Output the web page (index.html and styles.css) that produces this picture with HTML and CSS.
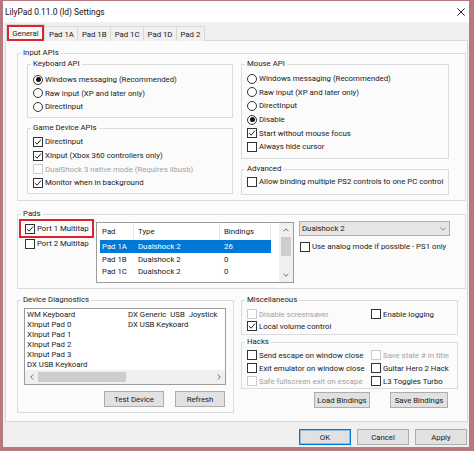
FILE: index.html
```html
<!DOCTYPE html>
<html>
<head>
<meta charset="utf-8">
<title>LilyPad Settings</title>
<link rel="stylesheet" href="styles.css">
</head>
<body>
<div class="window">
  <div class="titlebar">
    <span class="title">LilyPad 0.11.0 (ld) Settings</span>
    <svg class="close" viewBox="0 0 8 8"><path d="M0.3 0.3L7.7 7.7M7.7 0.3L0.3 7.7" stroke="#111" stroke-width="0.9" fill="none"/></svg>
  </div>
  <div class="client">
    <div class="tabs">
      <div class="tab active">General</div>
      <div class="tab first">Pad 1A</div>
      <div class="tab">Pad 1B</div>
      <div class="tab">Pad 1C</div>
      <div class="tab">Pad 1D</div>
      <div class="tab">Pad 2</div>
    </div>
    <div class="panel">
      <fieldset class="grp g-input">
        <legend>Input APIs</legend>
        <div class="cols">
          <div class="col col-l">
            <fieldset class="grp g-kbd">
              <legend>Keyboard API</legend>
              <div class="items pt4 rh135">
                <div class="it"><span class="rb on"></span>Windows messaging (Recommended)</div>
                <div class="it"><span class="rb"></span>Raw input (XP and later only)</div>
                <div class="it"><span class="rb"></span>DirectInput</div>
              </div>
            </fieldset>
            <fieldset class="grp g-game">
              <legend>Game Device APIs</legend>
              <div class="items pt2 rh137">
                <div class="it"><span class="cb"><svg viewBox="0 0 8 8"><path d="M1 4.1L3.1 6.2L7 1.6" stroke="#222" stroke-width="1" fill="none"/></svg></span>DirectInput</div>
                <div class="it"><span class="cb"><svg viewBox="0 0 8 8"><path d="M1 4.1L3.1 6.2L7 1.6" stroke="#222" stroke-width="1" fill="none"/></svg></span>XInput (Xbox 360 controllers only)</div>
                <div class="it dis"><span class="cb"></span>DualShock 3 native mode (Requires libusb)</div>
                <div class="it"><span class="cb"><svg viewBox="0 0 8 8"><path d="M1 4.1L3.1 6.2L7 1.6" stroke="#222" stroke-width="1" fill="none"/></svg></span>Monitor when in background</div>
              </div>
            </fieldset>
          </div>
          <div class="col col-r">
            <fieldset class="grp g-mouse">
              <legend>Mouse API</legend>
              <div class="items pt3 rh136">
                <div class="it"><span class="rb"></span>Windows messaging (Recommended)</div>
                <div class="it"><span class="rb"></span>Raw input (XP and later only)</div>
                <div class="it"><span class="rb"></span>DirectInput</div>
                <div class="it"><span class="rb on"></span>Disable</div>
                <div class="it"><span class="cb"><svg viewBox="0 0 8 8"><path d="M1 4.1L3.1 6.2L7 1.6" stroke="#222" stroke-width="1" fill="none"/></svg></span>Start without mouse focus</div>
                <div class="it"><span class="cb"></span>Always hide cursor</div>
              </div>
            </fieldset>
            <fieldset class="grp g-adv">
              <legend>Advanced</legend>
              <div class="items pt1 rh135">
                <div class="it"><span class="cb"></span>Allow binding multiple PS2 controls to one PC control</div>
              </div>
            </fieldset>
          </div>
        </div>
      </fieldset>

      <fieldset class="grp g-pads">
        <legend>Pads</legend>
        <div class="pads-body">
          <div class="ports">
            <div class="port hl"><span class="cb"><svg viewBox="0 0 8 8"><path d="M1 4.1L3.1 6.2L7 1.6" stroke="#222" stroke-width="1" fill="none"/></svg></span>Port 1 Multitap</div>
            <div class="port"><span class="cb"></span>Port 2 Multitap</div>
          </div>
          <div class="lv">
            <div class="lv-main">
              <div class="lv-head">
                <span class="h1">Pad</span><span class="h2">Type</span><span class="h3">Bindings</span>
              </div>
              <div class="lv-row sel"><span class="c1">Pad 1A</span><span class="c2">Dualshock 2</span><span class="c3">26</span></div>
              <div class="lv-row"><span class="c1">Pad 1B</span><span class="c2">Dualshock 2</span><span class="c3">0</span></div>
              <div class="lv-row"><span class="c1">Pad 1C</span><span class="c2">Dualshock 2</span><span class="c3">0</span></div>
              <div class="lv-row"><span class="c1">Pad 1D</span><span class="c2">Dualshock 2</span><span class="c3">26</span></div>
            </div>
            <div class="vscroll">
              <div class="sbtn"><svg viewBox="0 0 6 4"><path d="M0.5 3.3L3 0.8L5.5 3.3" stroke="#606060" stroke-width="0.9" fill="none"/></svg></div>
              <div class="vthumb"></div>
              <div class="sfill"></div>
              <div class="sbtn"><svg viewBox="0 0 6 4"><path d="M0.5 0.7L3 3.2L5.5 0.7" stroke="#606060" stroke-width="0.9" fill="none"/></svg></div>
            </div>
          </div>
          <div class="pad-opts">
            <div class="combo"><span class="combo-text">Dualshock 2</span><svg viewBox="0 0 6 4"><path d="M0.4 0.6L3 3.2L5.6 0.6" stroke="#707070" stroke-width="0.8" fill="none"/></svg></div>
            <div class="it analog"><span class="cb"></span>Use analog mode if possible - PS1 only</div>
          </div>
        </div>
      </fieldset>

      <div class="bottom">
        <fieldset class="grp g-diag">
          <legend>Device Diagnostics</legend>
          <div class="lb">
            <div class="lb-items">
              <span>WM Keyboard</span>
              <span>XInput Pad 0</span>
              <span>XInput Pad 1</span>
              <span>XInput Pad 2</span>
              <span>XInput Pad 3</span>
              <span>DX USB Keykoard</span>
              <span class="pre">DX Generic  USB  Joystick</span>
              <span>DX USB Keykoard</span>
            </div>
            <div class="hscroll">
              <div class="hbtn"><svg viewBox="0 0 4 6"><path d="M3.2 0.5L0.8 3L3.2 5.5" stroke="#606060" stroke-width="0.9" fill="none"/></svg></div>
              <div class="hthumb"></div>
              <div class="sfill"></div>
              <div class="hbtn"><svg viewBox="0 0 4 6"><path d="M0.8 0.5L3.2 3L0.8 5.5" stroke="#606060" stroke-width="0.9" fill="none"/></svg></div>
            </div>
          </div>
          <div class="btnrow diag-btns">
            <div class="btn w60">Test Device</div>
            <div class="btn w50">Refresh</div>
          </div>
        </fieldset>
        <div class="col-r2">
          <fieldset class="grp g-misc">
            <legend>Miscellaneous</legend>
            <div class="items grid2 pt3 rh12">
              <div class="it dis"><span class="cb"></span>Disable screensaver</div>
              <div class="it"><span class="cb"></span>Enable logging</div>
              <div class="it"><span class="cb"><svg viewBox="0 0 8 8"><path d="M1 4.1L3.1 6.2L7 1.6" stroke="#222" stroke-width="1" fill="none"/></svg></span>Local volume control</div>
            </div>
          </fieldset>
          <fieldset class="grp g-hacks">
            <legend>Hacks</legend>
            <div class="items grid2 pt15 rh13">
              <div class="it"><span class="cb"></span>Send escape on window close</div>
              <div class="it dis"><span class="cb"></span>Save state # in title</div>
              <div class="it"><span class="cb"></span>Exit emulator on window close</div>
              <div class="it"><span class="cb"></span>Guitar Hero 2 Hack</div>
              <div class="it dis"><span class="cb"></span>Safe fullscreen exit on escape</div>
              <div class="it"><span class="cb"></span>L3 Toggles Turbo</div>
            </div>
          </fieldset>
          <div class="btnrow bind-btns">
            <div class="btn w56">Load Bindings</div>
            <div class="btn w58">Save Bindings</div>
          </div>
        </div>
      </div>
    </div>
    <div class="footer">
      <div class="btn w52 default">OK</div>
      <div class="btn w52">Cancel</div>
      <div class="btn w52">Apply</div>
    </div>
  </div>
</div>
</body>
</html>
```
FILE: styles.css
```css
* { box-sizing: border-box; }
html, body { margin: 0; padding: 0; }
body {
  width: 474px;
  height: 451px;
  overflow: hidden;
  background: #b87880;
  font-family: Roboto, "Liberation Sans", sans-serif;
  font-size: 7.8px;
  color: #1a1a1a;
}
.window {
  width: 474px;
  height: 451px;
  border-style: solid;
  border-color: #b87880;
  border-width: 1px 5px 4px 3px;
  background: #f0f0f0;
  display: flex;
  flex-direction: column;
}
.titlebar {
  height: 21px;
  flex: none;
  background: #ffffff;
  display: flex;
  align-items: center;
  padding-left: 2px;
}
.title { flex: 1; font-size: 8.4px; color: #111; }
.close { width: 8px; height: 8px; margin-right: 4px; }
.client { flex: 1; display: flex; flex-direction: column; }

/* tabs */
.tabs {
  height: 19px;
  flex: none;
  padding-top: 2px;
  margin-left: 3px;
  margin-bottom: -1px;
  display: flex;
  align-items: flex-end;
  position: relative;
  z-index: 1;
}
.tab {
  height: 15px;
  padding: 0 3.5px;
  border: 1px solid #d9d9d9;
  border-bottom: none;
  background: #f0f0f0;
  margin-left: -1px;
  display: flex;
  align-items: center;
  white-space: nowrap;
}
.tab.first { padding-left: 6px; margin-left: 0; }
.tab.active {
  height: 17px;
  width: 39px;
  justify-content: center;
  padding: 0;
  margin-left: 0;
  margin-right: -3px;
  background: #fbfbfb;
  position: relative;
  z-index: 2;
  box-shadow: inset 0 0 0 2px #e2222c;
}

/* panel */
.panel {
  height: 382px;
  flex: none;
  margin: 0 1px 0 2px;
  border: 1px solid #d9d9d9;
  background: #fbfbfb;
  padding: 7px 0 0 11px;
}

/* group boxes */
fieldset.grp {
  margin: 0;
  padding: 0;
  border: 1px solid #dcdcdc;
  min-width: 0;
}
fieldset.grp > legend {
  margin-left: 3px;
  padding: 0 2px;
  height: 10px;
  line-height: 10px;
  white-space: nowrap;
}
.g-input { width: 449px; height: 153px; }
.cols { display: flex; gap: 8px; padding: 1px 0 0 9px; }
.col-l { width: 206px; display: flex; flex-direction: column; }
.col-r { width: 208px; display: flex; flex-direction: column; }
.g-kbd { height: 59px; }
.g-game { height: 71px; margin-top: 5px !important; }
.g-mouse { height: 100px; }
.g-adv { height: 31px; margin-top: 5px !important; }

.items { display: flex; flex-direction: column; padding-left: 5px; }
.items.grid2 { display: grid; grid-template-columns: 124px auto; }
.pt1 { padding-top: 1px; }
.pt15 { padding-top: 1.5px; }
.pt2 { padding-top: 2px; }
.pt3 { padding-top: 3px; }
.pt4 { padding-top: 4px; }
.it { display: flex; align-items: center; white-space: nowrap; }
.rh12 .it { height: 12px; }
.rh13 .it { height: 13px; }
.rh135 .it { height: 13.5px; }
.rh136 .it { height: 13.6px; }
.rh137 .it { height: 13.7px; }
.it.dis { color: #a2a2a2; }

.cb, .rb {
  flex: none;
  width: 10px;
  height: 10px;
  border: 1px solid #333;
  background: #fff;
  margin-right: 2px;
  display: flex;
  align-items: center;
  justify-content: center;
}
.cb svg { width: 8px; height: 8px; }
.dis .cb { border-color: #cccccc; }
.rb { border-radius: 50%; }
.rb.on::after {
  content: "";
  width: 5px;
  height: 5px;
  border-radius: 50%;
  background: #111;
}

/* pads */
.g-pads { width: 449px; height: 80px; margin-top: 8px !important; }
.pads-body { display: flex; align-items: flex-start; }
.ports { width: 78px; flex: none; padding: 2px 0 0 3px; }
.port { height: 15px; padding-left: 4px; display: flex; align-items: center; white-space: nowrap; }
.hl { width: 71px; box-shadow: 0 0 0 2px #e2222c; }

.lv {
  width: 198px;
  height: 61px;
  flex: none;
  margin-top: 3px;
  border: 1px solid #9c9c9c;
  background: #fff;
  display: flex;
}
.lv-main { flex: 1; overflow: hidden; }
.lv-head { display: flex; height: 17px; }
.lv-head span {
  display: flex;
  align-items: center;
  border-right: 1px solid #e5e5e5;
}
.h1 { width: 37px; padding-left: 5px; }
.h2 { width: 86px; padding-left: 4px; }
.h3 { width: 51px; padding-left: 4px; }
.lv-row { display: flex; align-items: center; height: 12.7px; width: 171px; margin-left: 3px; white-space: nowrap; }
.lv-row.sel { background: #0078d7; color: #fff; }
.c1 { width: 36px; padding-left: 2px; }
.c2 { width: 86px; padding-left: 2px; }
.c3 { padding-left: 2px; }
.vscroll { width: 14px; flex: none; background: #f0f0f0; display: flex; flex-direction: column; }
.sbtn { height: 14px; display: flex; align-items: center; justify-content: center; }
.sbtn svg { width: 6px; height: 4px; }
.vthumb { height: 19px; margin: 0 2px; background: #cdcdcd; }
.sfill { flex: 1; }

.pad-opts { margin: 2px 0 0 5px; }
.combo {
  width: 151px;
  height: 15px;
  border: 1px solid #adadad;
  background: #e5e5e5;
  display: flex;
  align-items: center;
  padding-left: 2px;
}
.combo-text { flex: 1; }
.combo svg { width: 6px; height: 4px; margin-right: 3px; }
.analog { height: 13px; margin-top: 4px; padding-left: 1px; }

/* bottom section */
.bottom { display: flex; gap: 7px; margin-top: 6px; }
.g-diag { width: 217px; height: 118px; }
.lb {
  width: 202px;
  height: 77px;
  margin: 3px 0 0 6px;
  border: 1px solid #9c9c9c;
  background: #fff;
  display: flex;
  flex-direction: column;
}
.lb-items {
  flex: 1;
  overflow: hidden;
  display: grid;
  grid-template-rows: repeat(6, 10px);
  grid-auto-flow: column;
  grid-auto-columns: 101px;
  padding: 1px 0 0 2px;
  line-height: 10px;
  white-space: nowrap;
}
.pre { white-space: pre; }
.hscroll { height: 14px; flex: none; background: #f0f0f0; display: flex; align-items: center; }
.hbtn { width: 13px; height: 14px; display: flex; align-items: center; justify-content: center; }
.hbtn svg { width: 4px; height: 6px; }
.hthumb { width: 88px; height: 10px; background: #cdcdcd; }

.btnrow { display: flex; justify-content: flex-end; }
.diag-btns { margin-top: 6px; padding-right: 8px; gap: 11px; }
.btn {
  height: 16px;
  border: 1px solid #adadad;
  background: #e1e1e1;
  display: flex;
  align-items: center;
  justify-content: center;
  white-space: nowrap;
}
.w50 { width: 50px; }
.w52 { width: 52px; }
.w56 { width: 56px; }
.w58 { width: 58px; }
.w60 { width: 60px; }
.btn.default { border-color: #0078d7; box-shadow: inset 0 0 0 1px rgba(0, 120, 215, 0.35); }

.col-r2 { width: 217px; display: flex; flex-direction: column; }
.g-misc { height: 40px; }
.g-hacks { height: 52px; margin-top: 2px !important; }
.bind-btns { margin-top: 3px; padding-right: 10px; gap: 20px; }

.footer { display: flex; justify-content: flex-end; gap: 6px; margin-top: 7px; padding-right: 2px; }
```
